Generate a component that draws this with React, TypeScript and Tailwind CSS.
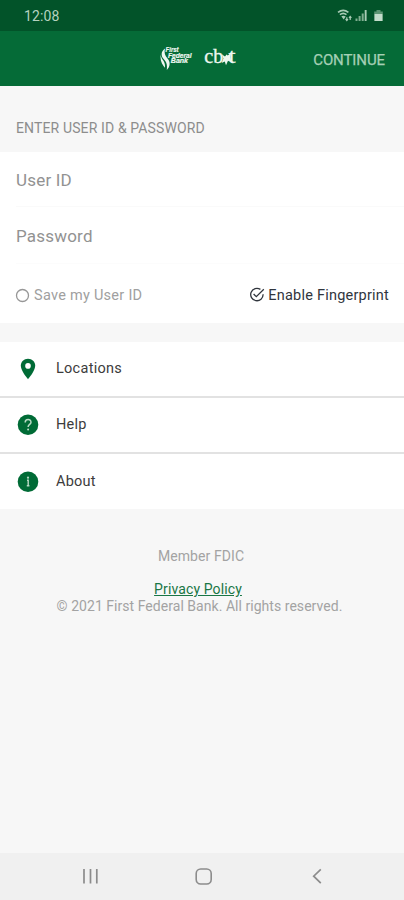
import React from "react";

function StatusIcons() {
  return (
    <svg width="50" height="16" viewBox="0 0 50 16" fill="none">
      <path d="M1 4.4C4.1 1.9 8.3 1.9 11.4 4.4" stroke="#a9cbb5" strokeWidth="1.6" />
      <path d="M2.9 6.7C4.9 5.1 7.5 5.1 9.5 6.7" stroke="#a9cbb5" strokeWidth="1.5" />
      <path d="M4.3 8.2L6.7 11.6L8.7 8.6C7.3 7.4 5.7 7.4 4.3 8.2Z" fill="#a9cbb5" />
      <path d="M9.8 9.2V12.6M8.6 11.2L9.8 12.6L11 11.2M13.2 12V8.4M12 9.8L13.2 8.4L14.4 9.8" stroke="#a9cbb5" strokeWidth="1.2" />
      <path d="M18.5 10.5h2V13h-2zM21.6 8h2v5h-2zM24.7 5.4h2V13h-2z" fill="#7fae90" />
      <path d="M27.7 2h1.9v11h-1.9z" fill="#a9cbb5" />
      <path d="M39.5 2h4v1.6h2.3V13h-8.6V3.6h2.3z" fill="#5c9573" />
      <path d="M37.6 6h7.8v7h-7.8z" fill="#c3dccb" />
    </svg>
  );
}

function BankLogo() {
  return (
    <svg width="34" height="26" viewBox="0 0 34 26" fill="#eef7f0">
      <path d="M5 2.5C.8 5.4 .8 10 3.9 13.3C6.2 16 7.6 18.5 6.8 24C10.6 20.5 10.4 15.5 7.5 12.5C4.9 9.8 4 6.4 5 2.5Z" />
      <path d="M.8 8.6C-.2 15 2.2 17.9 4.8 21.8C5.6 18 4 15.8 2.5 13.6C1.4 12 .8 10.5 .8 8.6Z" />
      <g fontFamily="'Liberation Sans', sans-serif" fontSize="6.6" fontWeight="700" fontStyle="italic" stroke="#eef7f0" strokeWidth=".2">
        <text x="5.6" y="6" textLength="13" lengthAdjust="spacingAndGlyphs">First</text>
        <text x="8" y="11.5" textLength="23.5" lengthAdjust="spacingAndGlyphs">Federal</text>
        <text x="10.8" y="17" textLength="17.2" lengthAdjust="spacingAndGlyphs">Bank</text>
      </g>
    </svg>
  );
}

function CbtLogo() {
  return (
    <svg width="34" height="24" viewBox="0 0 34 24" fill="#eef7f0" overflow="visible">
      <text x="0.3" y="17.2" fontFamily="'Liberation Serif', serif" fontSize="21.5" textLength="19" lengthAdjust="spacingAndGlyphs" stroke="#eef7f0" strokeWidth=".35">cb</text>
      <text x="24.6" y="17.2" fontFamily="'Liberation Serif', serif" fontSize="20" textLength="7" lengthAdjust="spacingAndGlyphs" stroke="#eef7f0" strokeWidth=".3">t</text>
      <path d="M18 8.6L21 10.6L22.6 8.4L23.8 9.4L27 6.8L26 11L27.6 16.6L24 14.8L22 19.2L20.8 15.5L17.6 17L19.4 12.4Z" />
    </svg>
  );
}

function PinIcon() {
  return (
    <svg width="22" height="22" viewBox="0 0 22 22">
      <path d="M11 .8C6.9 .8 3.8 3.8 3.8 7.8C3.8 13 11 21.2 11 21.2S18.2 13 18.2 7.8C18.2 3.8 15.1 .8 11 .8Z" fill="#006b36" />
      <circle cx="11" cy="7.9" r="2.8" fill="#fff" />
    </svg>
  );
}

function HelpIcon() {
  return (
    <svg width="22" height="22" viewBox="0 0 22 22">
      <circle cx="11" cy="10.7" r="10.3" fill="#006b36" />
      <path d="M8.2 8.4C8.2 4.6 14 4.6 14 8.2C14 10.4 11.1 10.4 11.1 13" fill="none" stroke="#b9dac5" strokeWidth="1.5" />
      <circle cx="11.1" cy="15.6" r="1" fill="#b9dac5" />
    </svg>
  );
}

function InfoIcon() {
  return (
    <svg width="22" height="22" viewBox="0 0 22 22">
      <circle cx="11" cy="10.7" r="10.3" fill="#006b36" />
      <path d="M10 9.2H11.2V14.6M9.8 14.8H12.4" fill="none" stroke="#b9dac5" strokeWidth="1.4" />
      <circle cx="11" cy="6.7" r="1.1" fill="#b9dac5" />
    </svg>
  );
}

const links = [
  { label: "Locations", Icon: PinIcon, row: "h-[56px] border-b-2 border-[#e2e2e2]", text: "tracking-[0.27px]" },
  { label: "Help", Icon: HelpIcon, row: "h-[56px] border-b-2 border-[#e2e2e2]", text: "tracking-[0.2px]" },
  { label: "About", Icon: InfoIcon, row: "h-[55px]", text: "tracking-[0.2px]" },
];

export default function App() {
  return (
    <div className="flex h-[900px] w-[404px] flex-col overflow-hidden bg-[#f7f7f7] font-['Roboto',sans-serif]">
      <div className="flex h-[31px] shrink-0 items-center justify-between bg-[#025329] pl-[24px] pr-[17px]">
        <span className="pt-px text-[14px] tracking-[0.1px] text-[#b5d2bf]">12:08</span>
        <div className="pt-px"><StatusIcons /></div>
      </div>

      <header className="flex h-[55px] shrink-0 items-center bg-[#056b37] pl-[160px] pr-[19px]">
        <BankLogo />
        <div className="mb-[2px] ml-[10px]"><CbtLogo /></div>
        <button className="ml-auto pt-[3px] text-[15px] tracking-[-0.1px] text-[#a5d0b5] [-webkit-text-stroke:0.25px_#a5d0b5]">CONTINUE</button>
      </header>

      <div className="flex h-[66px] shrink-0 items-center px-4 pt-[18px]">
        <h1 className="text-[14px] tracking-[0.13px] text-[#8d8d8d]">ENTER USER ID &amp; PASSWORD</h1>
      </div>

      <section className="h-[171px] shrink-0 bg-white">
        <div className="ml-4 flex h-[55px] items-center border-b border-[#fafafa] pt-[4px]">
          <span className="text-[17px] tracking-[0.2px] text-[#929292]">User ID</span>
        </div>
        <div className="ml-4 flex h-[57px] items-center border-b border-[#fcfcfc] pt-[4px]">
          <span className="text-[17px] tracking-[0.2px] text-[#929292]">Password</span>
        </div>
        <div className="flex h-[59px] items-center justify-between pl-[15px] pr-[15px] pt-[5px]">
          <div className="flex items-center gap-[4px]">
            <svg className="mb-[2px]" width="15" height="15" viewBox="0 0 15 15" fill="none">
              <circle cx="7.5" cy="7.5" r="6" stroke="#979797" strokeWidth="1.3" />
            </svg>
            <span className="text-[14.5px] tracking-[0.27px] text-[#a0a0a0]">Save my User ID</span>
          </div>
          <div className="flex items-center gap-[3px]">
            <svg className="mb-[2px]" width="16" height="16" viewBox="0 0 16 16" fill="none" stroke="#30353d" strokeWidth="1.3">
              <path d="M11.4 2.4A6.2 6.2 0 1 0 14.1 7.2" />
              <path d="M4.6 7L7.3 9.7L14.8 2.2" />
            </svg>
            <span className="text-[14.5px] tracking-[0.22px] text-[#30353d]">Enable Fingerprint</span>
          </div>
        </div>
      </section>

      <nav className="mt-[19px] shrink-0 bg-white">
        {links.map(({ label, Icon, row, text }) => (
          <a key={label} className={`flex items-center pl-[17px] ${row}`}>
            <Icon />
            <span className={`ml-[17px] text-[14.5px] text-[#3c3c3c] ${text}`}>{label}</span>
          </a>
        ))}
      </nav>

      <footer className="flex flex-1 flex-col items-center pr-[5px] pt-[39px] text-[14px] leading-[17px] text-[#a3a3a3]">
        <p className="ml-[3px] tracking-[0.08px]">Member FDIC</p>
        <a className="mr-[3px] mt-4 tracking-[0.12px] text-[#197645] underline">Privacy Policy</a>
        <p className="whitespace-nowrap tracking-[0.04px]">© 2021 First Federal Bank. All rights reserved.</p>
      </footer>

      <div className="flex h-[47px] shrink-0 items-center bg-[#f0f0f0] pl-[82px]">
        <svg width="16" height="18" viewBox="0 0 16 18" stroke="#8c8c8c" strokeWidth="1.7">
          <path d="M2 1V15.5M8.5 1V15.5M14.8 1V15.5" />
        </svg>
        <svg className="ml-[97px]" width="18" height="18" viewBox="0 0 18 18" fill="none" stroke="#8c8c8c" strokeWidth="1.6">
          <rect x="1.2" y="1" width="15" height="15" rx="4.5" />
        </svg>
        <svg className="ml-[97px]" width="14" height="18" viewBox="0 0 14 18" fill="none" stroke="#8c8c8c" strokeWidth="1.7">
          <path d="M10.8 1.3L3.7 8.2L10.8 15.1" />
        </svg>
      </div>
    </div>
  );
}
